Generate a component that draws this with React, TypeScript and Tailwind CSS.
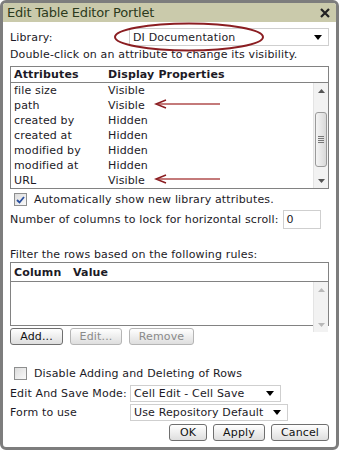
import React from 'react'

const font = { fontFamily: '"DejaVu Sans", Verdana, sans-serif' }

const attributes = [
  { name: 'file size', value: 'Visible' },
  { name: 'path', value: 'Visible' },
  { name: 'created by', value: 'Hidden' },
  { name: 'created at', value: 'Hidden' },
  { name: 'modified by', value: 'Hidden' },
  { name: 'modified at', value: 'Hidden' },
  { name: 'URL', value: 'Visible' },
]

function DownTri({ className = '' }: { className?: string }) {
  return (
    <svg width="8" height="5" viewBox="0 0 8 5" className={className}>
      <path d="M0 0 H8 L4 5 Z" fill="#000" />
    </svg>
  )
}

function Scrollbar({ thumb, disabled }: { thumb?: boolean; disabled?: boolean }) {
  const arrow = disabled ? '#b8b8b8' : '#555'
  return (
    <div className="w-[15px] h-full bg-[#f2f2f2] border-l border-[#e4e4e4] flex flex-col items-center">
      <div className="h-[15px] flex items-center justify-center">
        <svg width="7" height="4" viewBox="0 0 7 4"><path d="M0 4 L3.5 0 L7 4 Z" fill={arrow} /></svg>
      </div>
      <div className="flex-1 w-full px-[1px] pt-[14px] pb-[6px]">
        {thumb && (
          <div className="h-full rounded-[3px] border border-[#9a9a9a] bg-gradient-to-r from-[#f4f4f4] to-[#d9d9d9] flex flex-col items-center justify-center gap-[1px]">
            <div className="w-[6px] h-px bg-[#777]" />
            <div className="w-[6px] h-px bg-[#777]" />
            <div className="w-[6px] h-px bg-[#777]" />
            <div className="w-[6px] h-px bg-[#777]" />
          </div>
        )}
      </div>
      <div className="h-[15px] flex items-center justify-center">
        <svg width="7" height="4" viewBox="0 0 7 4"><path d="M0 0 H7 L3.5 4 Z" fill={arrow} /></svg>
      </div>
    </div>
  )
}

function Btn({ children, disabled, className = '' }: { children: React.ReactNode; disabled?: boolean; className?: string }) {
  return (
    <div
      className={`h-[17px] flex items-center justify-center rounded-[3px] border bg-gradient-to-b from-[#ffffff] to-[#dedede] ${
        disabled ? 'border-[#b5b5b5] text-[#8a8a8a]' : 'border-[#6f6f6f] text-[#111]'
      } ${className}`}
    >
      {children}
    </div>
  )
}

function Check({ checked }: { checked?: boolean }) {
  return (
    <div className="w-[13px] h-[13px] border border-[#8e8f8f] bg-gradient-to-br from-[#dcdcdc] to-[#fafafa] flex items-center justify-center">
      {checked && (
        <svg width="9" height="8" viewBox="0 0 9 8">
          <path d="M1 4 L3.5 6.5 L8 1" stroke="#2a4f9e" strokeWidth="1.8" fill="none" />
        </svg>
      )}
    </div>
  )
}

function Select({ label, className = '' }: { label: string; className?: string }) {
  return (
    <div className={`h-full border border-[#cfcfcf] bg-white flex items-center justify-between pl-[3px] pr-[6px] ${className}`}>
      <span>{label}</span>
      <DownTri />
    </div>
  )
}

export default function App() {
  return (
    <div className="w-[339px] h-[450px] bg-white text-[11px] tracking-[0.15px] text-[#1c1a26] leading-none" style={font}>
      <div className="relative w-full h-full border-[3px] border-[#7d7d7d] rounded-[6px] overflow-hidden flex flex-col">
        {/* title bar */}
        <div className="h-[19px] bg-[#cacaab] flex items-center justify-between pl-[4px] pr-[6px] shrink-0">
          <span className="text-[13px] tracking-[-0.2px] text-[#2c3a1c]">Edit Table Editor Portlet</span>
          <svg width="10" height="10" viewBox="0 0 10 10">
            <path d="M1 1 L9 9 M9 1 L1 9" stroke="#222" strokeWidth="2.2" />
          </svg>
        </div>

        <div className="px-[7px] flex flex-col">
          {/* library */}
          <div className="mt-[6px] h-[18px] flex items-center">
            <span className="w-[119px]">Library:</span>
            <Select label="DI Documentation" className="flex-1" />
          </div>
          <div className="mt-[2px] h-[12px] flex items-center">Double-click on an attribute to change its visibility.</div>

          {/* attributes list */}
          <div className="mt-[6px] h-[123px] border border-[#828282] flex flex-col">
            <div className="h-[16px] border-b border-[#828282] flex items-center font-bold pl-[3px] shrink-0">
              <span className="w-[94px]">Attributes</span>
              <span>Display Properties</span>
            </div>
            <div className="flex-1 flex">
              <div className="flex-1">
                {attributes.map(a => (
                  <div key={a.name} className="h-[15px] flex items-center pl-[3px]">
                    <span className="w-[94px]">{a.name}</span>
                    <span>{a.value}</span>
                  </div>
                ))}
              </div>
              <Scrollbar thumb />
            </div>
          </div>

          <div className="mt-[4px] h-[13px] flex items-center pl-[4px] gap-[7px]">
            <Check checked />
            <span>Automatically show new library attributes.</span>
          </div>

          <div className="mt-[4px] h-[19px] flex items-center">
            <span>Number of columns to lock for horizontal scroll:</span>
            <div className="ml-[4px] w-[38px] h-[19px] border border-[#cfcfcf] flex items-center pl-[3px]">0</div>
          </div>

          <div className="mt-[19px] h-[12px] flex items-center">Filter the rows based on the following rules:</div>

          {/* filter table */}
          <div className="mt-[2px] h-[64px] border border-[#828282] flex flex-col">
            <div className="h-[19px] border-b border-[#828282] flex items-center font-bold pl-[3px] shrink-0">
              <span className="w-[59px]">Column</span>
              <span>Value</span>
            </div>
            <div className="flex-1 flex">
              <div className="flex-1" />
              <Scrollbar disabled />
            </div>
          </div>

          <div className="mt-[2px] flex gap-[7px]">
            <Btn className="w-[53px]">Add...</Btn>
            <Btn disabled className="w-[52px]">Edit...</Btn>
            <Btn disabled className="w-[65px]">Remove</Btn>
          </div>

          <div className="mt-[22px] h-[13px] flex items-center pl-[4px] gap-[7px]">
            <Check />
            <span>Disable Adding and Deleting of Rows</span>
          </div>

          <div className="mt-[5px] h-[17px] flex items-center">
            <span className="w-[120px]">Edit And Save Mode:</span>
            <Select label="Cell Edit - Cell Save" className="w-[151px]" />
          </div>
          <div className="mt-[2px] h-[17px] flex items-center">
            <span className="w-[120px]">Form to use</span>
            <Select label="Use Repository Default" className="w-[158px]" />
          </div>

          <div className="mt-[3px] flex justify-end gap-[6px]">
            <Btn className="w-[38px]">OK</Btn>
            <Btn className="w-[52px]">Apply</Btn>
            <Btn className="w-[58px]">Cancel</Btn>
          </div>
        </div>

        {/* annotations */}
        <svg className="absolute left-[-3px] top-[-3px] pointer-events-none" width="339" height="450">
          <ellipse cx="189" cy="37" rx="74" ry="13.5" fill="none" stroke="#8b1e22" strokeWidth="2" />
          <g stroke="#c47a7a" strokeWidth="2">
            <line x1="158" y1="104" x2="220" y2="104" />
            <line x1="158" y1="179" x2="220" y2="179" />
          </g>
          <g stroke="#8b1e22" strokeWidth="1.5" fill="none">
            <path d="M166 100 L156 104 L166 108" />
            <path d="M166 175 L156 179 L166 183" />
          </g>
        </svg>
      </div>
    </div>
  )
}
